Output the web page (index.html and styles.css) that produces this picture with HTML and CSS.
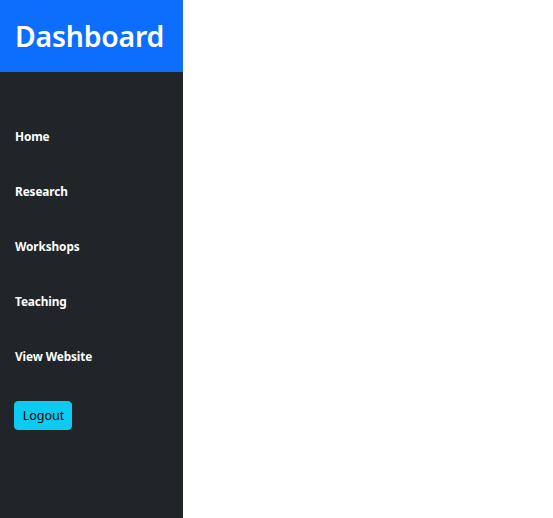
FILE: index.html
```html
<!DOCTYPE html>
<html>
<head>
<meta charset="utf-8">
<link rel="stylesheet" href="styles.css">
</head>
<body>
<div class="layout">
  <aside class="sidebar">
    <header class="brand"><h1>Dashboard</h1></header>
    <nav class="nav">
      <a class="nav-link" href="#">Home</a>
      <a class="nav-link" href="#">Research</a>
      <a class="nav-link" href="#">Workshops</a>
      <a class="nav-link" href="#">Teaching</a>
      <a class="nav-link" href="#">View Website</a>
      <div class="logout-wrap"><button class="btn-logout">Logout</button></div>
    </nav>
  </aside>
  <main class="content"></main>
</div>
</body>
</html>
```
FILE: styles.css
```css
html, body { margin: 0; padding: 0; height: 100%; }
body { font-family: "Noto Sans", "Open Sans", sans-serif; background: #fff; }
.layout { display: flex; height: 518px; }
.sidebar { width: 183px; background: #212529; display: flex; flex-direction: column; }
.brand { background: #0d6efd; height: 72px; display: flex; align-items: center; padding-left: 15px; }
.brand h1 { margin: 0; color: #fff; font-size: 28.4px; font-weight: 600; letter-spacing: -0.2px; }
.nav { display: flex; flex-direction: column; padding-top: 36px; }
.nav-link { display: flex; align-items: center; height: 55px; padding-left: 15px; color: #fff; font-weight: 700; font-size: 11.8px; letter-spacing: -0.1px; text-decoration: none; }
.logout-wrap { padding: 18px 0 0 14px; }
.btn-logout { background: #0dcaf0; border: 1px solid #0dcaf0; border-radius: 4px; color: #000; font-family: inherit; font-size: 12.5px; height: 29px; width: 58px; padding: 0 0 0 1px; }
.content { flex: 1; }
```
